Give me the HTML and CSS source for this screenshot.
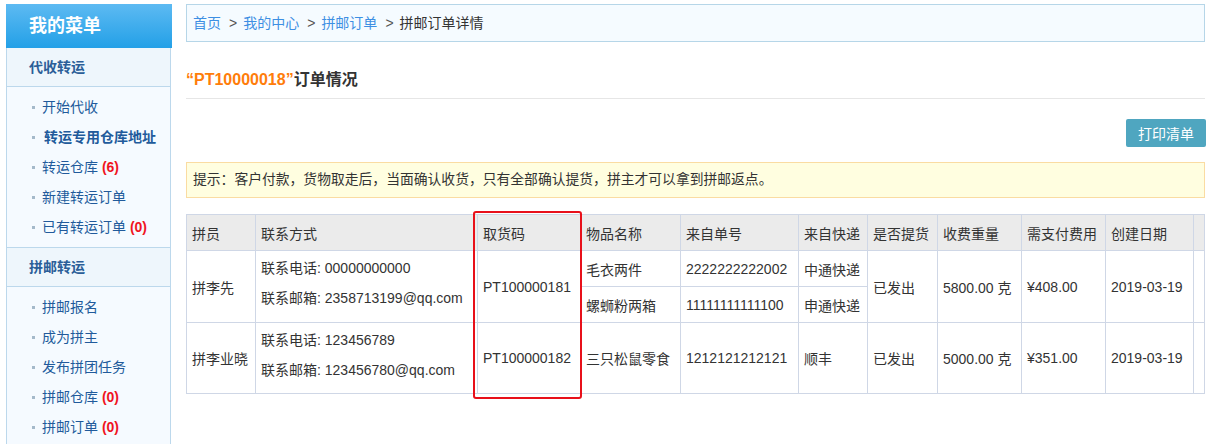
FILE: index.html
```html
<!DOCTYPE html>
<html lang="zh-CN">
<head>
    <meta charset="UTF-8">
    <title>拼邮订单详情</title>
    <link rel="stylesheet" href="styles.css">
</head>
<body>
    <div class="page">
        <div class="sidebar">
            <div class="menu-title">我的菜单</div>

            <div class="menu-group">代收转运</div>
            <ul class="menu-list">
                <li><a href="#">开始代收</a></li>
                <li class="active"><a href="#">转运专用仓库地址</a></li>
                <li><a href="#">转运仓库 <span class="count">(6)</span></a></li>
                <li><a href="#">新建转运订单</a></li>
                <li><a href="#">已有转运订单 <span class="count">(0)</span></a></li>
            </ul>

            <div class="menu-group">拼邮转运</div>
            <ul class="menu-list">
                <li><a href="#">拼邮报名</a></li>
                <li><a href="#">成为拼主</a></li>
                <li><a href="#">发布拼团任务</a></li>
                <li><a href="#">拼邮仓库 <span class="count">(0)</span></a></li>
                <li><a href="#">拼邮订单 <span class="count">(0)</span></a></li>
            </ul>
        </div>

        <div class="main">
            <div class="breadcrumb">
                <a href="#">首页</a><span class="sep">&gt;</span><a href="#">我的中心</a><span class="sep">&gt;</span><a href="#">拼邮订单</a><span class="sep">&gt;</span><span class="current">拼邮订单详情</span>
            </div>

            <h2 class="order-title"><span class="order-no">“PT10000018”</span>订单情况</h2>

            <div class="toolbar">
                <button class="btn-print">打印清单</button>
            </div>

            <div class="tip">提示：客户付款，货物取走后，当面确认收货，只有全部确认提货，拼主才可以拿到拼邮返点。</div>

            <div class="table-wrap">
                <table class="order-table">
                    <colgroup>
                        <col style="width:69px">
                        <col style="width:222px">
                        <col style="width:103px">
                        <col style="width:100px">
                        <col style="width:118px">
                        <col style="width:69px">
                        <col style="width:70px">
                        <col style="width:84px">
                        <col style="width:84px">
                        <col style="width:88px">
                        <col>
                    </colgroup>
                    <thead>
                        <tr>
                            <th>拼员</th>
                            <th>联系方式</th>
                            <th>取货码</th>
                            <th>物品名称</th>
                            <th>来自单号</th>
                            <th>来自快递</th>
                            <th>是否提货</th>
                            <th>收费重量</th>
                            <th>需支付费用</th>
                            <th>创建日期</th>
                            <th></th>
                        </tr>
                    </thead>
                    <tbody>
                        <tr class="sub-row">
                            <td rowspan="2">拼李先</td>
                            <td rowspan="2" class="contact-cell">
                                <div class="contact">联系电话: 00000000000</div>
                                <div class="contact">联系邮箱: 2358713199@qq.com</div>
                            </td>
                            <td rowspan="2">PT100000181</td>
                            <td>毛衣两件</td>
                            <td>2222222222002</td>
                            <td>中通快递</td>
                            <td rowspan="2">已发出</td>
                            <td rowspan="2">5800.00 克</td>
                            <td rowspan="2">¥408.00</td>
                            <td rowspan="2">2019-03-19</td>
                            <td rowspan="2"></td>
                        </tr>
                        <tr class="sub-row">
                            <td>螺蛳粉两箱</td>
                            <td>11111111111100</td>
                            <td>申通快递</td>
                        </tr>
                        <tr class="big-row">
                            <td>拼李业晓</td>
                            <td class="contact-cell">
                                <div class="contact">联系电话: 123456789</div>
                                <div class="contact">联系邮箱: 123456780@qq.com</div>
                            </td>
                            <td>PT100000182</td>
                            <td>三只松鼠零食</td>
                            <td>1212121212121</td>
                            <td>顺丰</td>
                            <td>已发出</td>
                            <td>5000.00 克</td>
                            <td>¥351.00</td>
                            <td>2019-03-19</td>
                            <td></td>
                        </tr>
                    </tbody>
                </table>
                <div class="mark-box"></div>
            </div>
        </div>
    </div>
</body>
</html>
```

FILE: styles.css
```css
body {
    margin: 0;
    font-family: "Liberation Sans", "Noto Sans CJK SC", sans-serif;
    font-size: 14px;
    color: #333;
    background: #fff;
}

a {
    text-decoration: none;
}

.page {
    display: flex;
    align-items: flex-start;
    padding-left: 6px;
}

/* 左侧菜单 */
.sidebar {
    width: 163px;
    flex-shrink: 0;
    margin-top: 4px;
    min-height: 460px;
    background: #f5faff;
    border-left: 1px solid #bcd8ec;
    border-right: 1px solid #bcd8ec;
}

.menu-title {
    height: 44px;
    line-height: 44px;
    margin: 0 -2px 0 -1px;
    padding-left: 23px;
    background: linear-gradient(#5dbaf2, #23a0e7);
    color: #fff;
    font-size: 18px;
    font-weight: bold;
}

.menu-group {
    height: 38px;
    line-height: 38px;
    padding-left: 22px;
    background: #eef6fc;
    border-bottom: 1px solid #bcd8ec;
    color: #2b5e98;
    font-weight: bold;
}

.menu-list {
    list-style: none;
    margin: 0;
    padding: 5px 0;
    border-bottom: 1px solid #bcd8ec;
}

.menu-list li {
    position: relative;
    height: 30px;
    line-height: 30px;
    padding-left: 35px;
}

.menu-list li::before {
    content: "";
    position: absolute;
    left: 25px;
    top: 14px;
    width: 3px;
    height: 3px;
    background: #a4b9ca;
}

.menu-list a {
    color: #215a9b;
}

.menu-list li.active a {
    font-weight: bold;
    padding-left: 2px;
}

.count {
    color: #f0141e;
    font-weight: bold;
}

/* 右侧主体 */
.main {
    flex: 1;
    margin-left: 15px;
    margin-right: 12px;
}

.breadcrumb {
    margin-top: 4px;
    height: 36px;
    line-height: 36px;
    padding-left: 6px;
    background: #f5fbff;
    border: 1px solid #b6d6e8;
}

.breadcrumb a {
    color: #3d8fe3;
}

.breadcrumb .sep {
    color: #555;
    margin: 0 6px 0 8px;
}

.breadcrumb .current {
    color: #333;
}

.order-title {
    margin: 26px 0 0;
    padding-bottom: 6px;
    line-height: 24px;
    font-size: 16px;
    font-weight: bold;
    color: #333;
    border-bottom: 1px solid #e6e6e6;
}

.order-no {
    color: #ff7d0a;
}

.toolbar {
    display: flex;
    justify-content: flex-end;
    margin-top: 20px;
    margin-right: -1px;
}

.btn-print {
    width: 80px;
    height: 28px;
    padding: 0;
    border: none;
    border-radius: 2px;
    background: #4fa6c0;
    color: #fff;
    font-family: inherit;
    font-size: 14px;
}

.tip {
    margin-top: 15px;
    height: 34px;
    line-height: 34px;
    padding-left: 6px;
    background: #fffee0;
    border: 1px solid #fadca2;
    font-size: 13.8px;
}

.table-wrap {
    position: relative;
    margin-top: 16px;
}

.order-table {
    width: 100%;
    table-layout: fixed;
    border-collapse: collapse;
    border: 1px solid #cfd7e6;
}

.order-table th,
.order-table td {
    border: 1px solid #cfd7e6;
    padding: 0 0 0 5px;
    text-align: left;
    font-weight: normal;
    white-space: nowrap;
}

.order-table th {
    height: 35px;
    background: #ebebeb;
}

.order-table .sub-row td {
    height: 35px;
}

.order-table .big-row td {
    height: 70px;
}

.order-table .contact-cell {
    padding-bottom: 7px;
}

.order-table .big-row td.contact-cell {
    height: 63px;
}

.contact {
    line-height: 30px;
}

/* 红色标注框 */
.mark-box {
    position: absolute;
    left: 287px;
    top: -3px;
    width: 105px;
    height: 184px;
    border: 2px solid #e8101a;
    border-radius: 3px;
}
```
